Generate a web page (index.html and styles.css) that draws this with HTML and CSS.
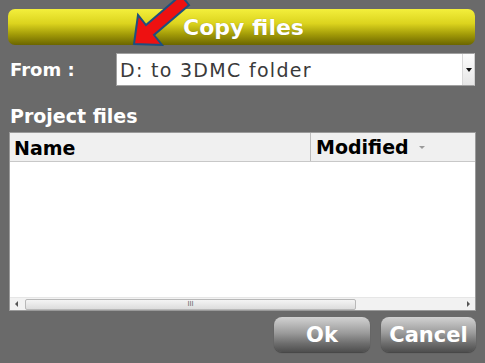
FILE: index.html
```html
<!DOCTYPE html>
<html lang="en">
<head>
  <meta charset="UTF-8" />
  <title>Copy files</title>
  <link rel="stylesheet" href="styles.css">
</head>
<body>
  <div id="dialog">
    <!-- Title bar with pointer arrow -->
    <div id="titlebar">Copy files</div>
    <svg id="pointer" width="70" height="50" viewBox="128 0 70 50">
      <polygon points="134,44 138,15 146,25 181,-5 189,5 154,35 162,45"
        fill="#ee1111" stroke="#1d4f7f" stroke-width="2" stroke-linejoin="miter" />
    </svg>

    <!-- Source selector -->
    <div class="row">
      <label class="label">From :</label>
      <div class="select">
        <span class="value">D: to 3DMC folder</span>
        <div class="drop"><span class="tri"></span></div>
      </div>
    </div>

    <div class="section">Project files</div>

    <!-- File list -->
    <div id="list">
      <div class="head">
        <div class="col name">Name</div>
        <div class="col modified">Modified <span class="sort"></span></div>
      </div>
      <div class="body"></div>
      <div class="hscroll">
        <span class="arr left"></span>
        <div class="track"><div class="thumb"><span class="grip">III</span></div></div>
        <span class="arr right"></span>
      </div>
    </div>

    <div class="buttons">
      <div class="btn ok">Ok</div>
      <div class="btn cancel">Cancel</div>
    </div>
  </div>
</body>
</html>
```

FILE: styles.css
```css
* {
  box-sizing: border-box;
  margin: 0;
  padding: 0;
}
html, body {
  width: 485px;
  height: 363px;
  background: #6a6a6a;
  font-family: "DejaVu Sans", sans-serif;
  overflow: hidden;
}
#dialog {
  position: relative;
  padding: 9px 10px 0 8px;
}
/* Yellow title bar */
#titlebar {
  height: 36px;
  border-radius: 7px;
  background: linear-gradient(#f3ef3c, #dcd41e 40%, #a39c08 70%, #6b6500);
  color: #fff;
  font-weight: bold;
  font-size: 22px;
  text-align: center;
  line-height: 38px;
  padding-left: 4px;
  text-shadow: 0 0 1px rgba(0,0,0,0.3);
}
#pointer {
  position: absolute;
  left: 128px;
  top: 0;
}
.row {
  display: flex;
  align-items: center;
  margin-top: 8px;
  height: 33px;
}
.label {
  width: 108px;
  color: #fff;
  font-size: 18px;
  font-weight: bold;
  padding-left: 2px;
}
.select {
  flex: 1;
  height: 33px;
  display: flex;
  align-items: center;
  background: #fff;
  border: 1px solid #a0a0a0;
  border-right-color: #d0d0d0;
  font-size: 19px;
  letter-spacing: 1.3px;
  color: #3a3a3a;
  padding-left: 3px;
}
.value {
  flex: 1;
}
.drop {
  width: 12px;
  height: 31px;
  border-left: 1px solid #d8d8d8;
  background: linear-gradient(#fdfdfd, #e6e6e6);
  display: flex;
  align-items: center;
  justify-content: center;
}
.tri {
  width: 0;
  height: 0;
  border-left: 3px solid transparent;
  border-right: 3px solid transparent;
  border-top: 4px solid #111;
}
.section {
  color: #fff;
  font-weight: bold;
  font-size: 19px;
  margin-top: 19px;
  height: 27px;
  padding-left: 2px;
}
/* File list */
#list {
  height: 179px;
  margin-left: 1px;
  margin-right: -1px;
  background: #fff;
  border: 1px solid #9a9a9a;
  display: flex;
  flex-direction: column;
}
.head {
  display: flex;
  height: 29px;
  background: #f0f0f0;
  border-bottom: 1px solid #c8c8c8;
}
.col {
  font-weight: bold;
  font-size: 19px;
  color: #000;
  line-height: 30px;
}
.name {
  width: 301px;
  padding-left: 4px;
  border-right: 1px solid #bdbdbd;
}
.modified {
  flex: 1;
  padding-left: 5px;
  display: flex;
  align-items: center;
  gap: 10px;
}
.sort {
  width: 0;
  height: 0;
  border-left: 3px solid transparent;
  border-right: 3px solid transparent;
  border-top: 3px solid #9a9a9a;
}
.body {
  flex: 1;
}
.hscroll {
  height: 13px;
  display: flex;
  align-items: center;
  background: #f2f2f2;
  border-top: 1px solid #e6e6e6;
}
.arr {
  width: 0;
  height: 0;
  border-top: 3px solid transparent;
  border-bottom: 3px solid transparent;
}
.arr.left {
  border-right: 3px solid #555;
  margin: 0 7px 0 5px;
}
.arr.right {
  border-left: 3px solid #555;
  margin: 0 5px 0 0;
}
.track {
  flex: 1;
  height: 11px;
}
.thumb {
  width: 331px;
  height: 11px;
  border: 1px solid #b8b8b8;
  border-radius: 2px;
  background: linear-gradient(#f4f4f4, #dcdcdc);
  text-align: center;
  font-size: 7px;
  line-height: 9px;
  color: #666;
}
/* Bottom buttons */
.buttons {
  display: flex;
  justify-content: flex-end;
  gap: 11px;
  margin-top: 6px;
  margin-right: -1px;
}
.btn {
  height: 35px;
  border-radius: 8px;
  background: linear-gradient(#d2d2d2, #9c9c9c 45%, #6e6e6e 75%, #4e4e4e);
  color: #fff;
  font-weight: bold;
  font-size: 21px;
  line-height: 36px;
  text-align: center;
  box-shadow: 0 1px 1px rgba(0,0,0,0.35);
}
.ok {
  width: 96px;
}
.cancel {
  width: 95px;
}
```
